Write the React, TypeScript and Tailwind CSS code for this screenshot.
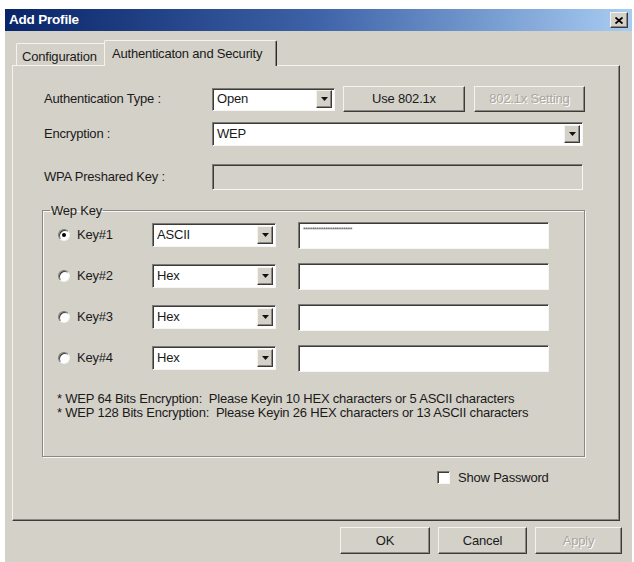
import React from "react";

const raised =
  "border border-t-[#f4f3f0] border-l-[#f4f3f0] border-b-[#3c3b38] border-r-[#3c3b38] shadow-[inset_-1px_-1px_0_#8a8883]";
const sunken =
  "border border-t-[#7d7b76] border-l-[#7d7b76] border-b-[#f7f6f3] border-r-[#f7f6f3] shadow-[inset_1px_1px_0_#3c3b38]";

function Arrow() {
  return (
    <div className={`w-[16px] h-[18px] bg-[#d4d1c9] flex items-center justify-center shrink-0 ${raised}`}>
      <svg width="7" height="4" viewBox="0 0 7 4">
        <path d="M0 0h7L3.5 4z" fill="#111" />
      </svg>
    </div>
  );
}

function Select({ value, className }: { value: string; className: string }) {
  return (
    <div className={`bg-white flex items-center justify-between pl-[4px] pr-[2px] ${sunken} ${className}`}>
      <span>{value}</span>
      <Arrow />
    </div>
  );
}

function Button({ label, className, disabled }: { label: string; className: string; disabled?: boolean }) {
  return (
    <div
      className={`bg-[#d4d1c9] flex items-center justify-center ${raised} ${className} ${
        disabled ? "text-[#a8a69f] [text-shadow:1px_1px_0_#ffffff]" : "text-[#1a1a1a]"
      }`}
    >
      {label}
    </div>
  );
}

function Radio({ checked }: { checked?: boolean }) {
  return (
    <div className="w-[12px] h-[12px] rounded-full bg-white border border-t-[#7d7b76] border-l-[#7d7b76] border-b-[#f2f1ee] border-r-[#f2f1ee] shadow-[inset_1px_1px_0_#3c3b38] flex items-center justify-center shrink-0">
      {checked && <div className="w-[4px] h-[4px] rounded-full bg-black" />}
    </div>
  );
}

function KeyRow({ n, type, checked, pwd }: { n: number; type: string; checked?: boolean; pwd?: boolean }) {
  return (
    <div className="flex items-center h-[27px]">
      <Radio checked={checked} />
      <span className="ml-[7px] w-[75px]">Key#{n}</span>
      <Select value={type} className="w-[124px] h-[24px]" />
      <div className={`ml-[22px] w-[251px] h-[27px] bg-white pl-[4px] pt-[3px] ${sunken}`}>
        {pwd && <span className="text-[7px] leading-[8px] text-[#555] tracking-[-0.5px] block">**********************</span>}
      </div>
    </div>
  );
}

export default function App() {
  return (
    <div className="w-[634px] h-[562px] bg-white pt-[9px] pl-[5px] pr-[2px] font-['Liberation_Sans',Arial,sans-serif] text-[13px] tracking-[-0.2px] text-[#1a1a1a] overflow-hidden">
      <div className="h-[553px] bg-[#d4d1c9] flex flex-col">
        <div className="h-[22px] bg-gradient-to-r from-[#0a2468] via-[#3f63a8] to-[#a9cdf2] flex items-center justify-between pl-[4px] pr-[4px]">
          <span className="text-white font-bold text-[13.5px]">Add Profile</span>
          <div className={`w-[18px] h-[16px] bg-[#d4d1c9] flex items-center justify-center ${raised}`}>
            <svg width="8" height="7" viewBox="0 0 8 7">
              <path d="M0.5 0.5L7.5 6.5M7.5 0.5L0.5 6.5" stroke="#000" strokeWidth="1.8" />
            </svg>
          </div>
        </div>
        <div className="pl-[7px] pr-[12px] pt-[9px]">
          <div className="flex items-end h-[25px] pl-[4px]">
            <div className="w-[88px] h-[22px] border-t border-l border-[#f4f3f0] rounded-tl-[2px] pl-[5px] pt-[3px]">
              Configuration
            </div>
            <div className="relative z-10 w-[173px] h-[26px] -mb-[1px] bg-[#d4d1c9] border-t border-l border-[#f4f3f0] border-r border-r-[#2a2a28] shadow-[inset_-1px_0_0_#8a8883] rounded-t-[2px] pl-[7px] pt-[3px]">
              Authenticaton and Security
            </div>
          </div>
          <div className={`h-[456px] w-[608px] ${raised} pl-[31px] pt-[20px]`}>
            <div className="flex items-center h-[26px]">
              <span className="w-[168px]">Authentication Type :</span>
              <Select value="Open" className="w-[123px] h-[23px]" />
              <Button label="Use 802.1x" className="ml-[8px] w-[122px] h-[26px]" />
              <Button label="802.1x Setting" disabled className="ml-[9px] w-[111px] h-[26px]" />
            </div>
            <div className="flex items-center h-[24px] mt-[10px]">
              <span className="w-[168px]">Encryption :</span>
              <Select value="WEP" className="w-[371px] h-[24px]" />
            </div>
            <div className="flex items-center h-[26px] mt-[18px]">
              <span className="w-[168px]">WPA Preshared Key :</span>
              <div className={`w-[371px] h-[26px] bg-[#d4d1c9] ${sunken}`} />
            </div>
            <fieldset className="mt-[11px] -ml-[2px] w-[543px] h-[256px] border border-[#8a8883] shadow-[1px_1px_0_#f7f6f3,inset_1px_1px_0_#f7f6f3] pl-[15px] pt-[1px]">
              <legend className="-ml-[8px] px-[1px]">Wep Key</legend>
              <div className="flex flex-col gap-[14px]">
                <KeyRow n={1} type="ASCII" checked pwd />
                <KeyRow n={2} type="Hex" />
                <KeyRow n={3} type="Hex" />
                <KeyRow n={4} type="Hex" />
              </div>
              <div className="mt-[20px] leading-[14px] -ml-[1px]">
                <div>* WEP 64 Bits Encryption:&nbsp; Please Keyin 10 HEX characters or 5 ASCII characters</div>
                <div>* WEP 128 Bits Encryption:&nbsp; Please Keyin 26 HEX characters or 13 ASCII characters</div>
              </div>
            </fieldset>
            <div className="flex items-center mt-[11px] ml-[393px]">
              <div className={`w-[13px] h-[13px] bg-white ${sunken}`} />
              <span className="ml-[8px]">Show Password</span>
            </div>
          </div>
        </div>
        <div className="flex justify-end gap-[8px] pr-[10px] pt-[6px]">
          <Button label="OK" className="w-[90px] h-[27px]" />
          <Button label="Cancel" className="w-[89px] h-[27px]" />
          <Button label="Apply" disabled className="w-[87px] h-[27px]" />
        </div>
      </div>
    </div>
  );
}
